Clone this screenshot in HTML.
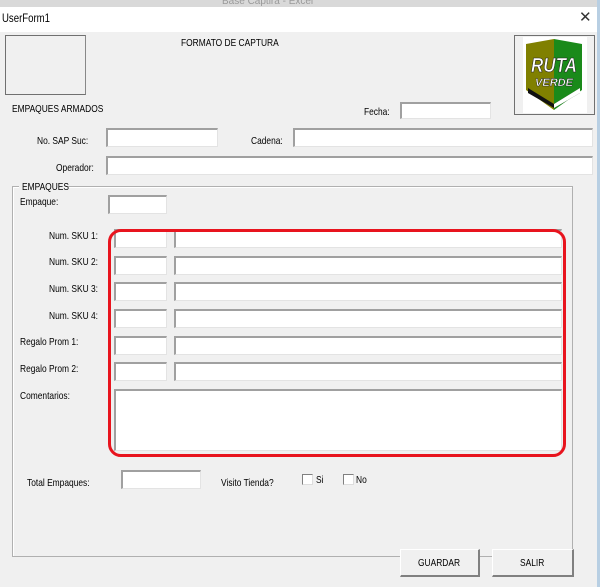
<!DOCTYPE html>
<html><head><meta charset="utf-8"><style>
*{margin:0;padding:0;box-sizing:border-box}
body{width:600px;height:587px;overflow:hidden;background:#f0f0f0;font-family:"Liberation Sans",sans-serif;font-size:10px;color:#000;position:relative}
.a{position:absolute;white-space:nowrap}
.t{position:absolute;white-space:nowrap;transform:scaleX(.8);transform-origin:left top;font-size:10.5px}
.in{position:absolute;background:#fff;border-top:2px solid #a0a0a0;border-left:2px solid #a0a0a0;border-right:1px solid #e3e3e3;border-bottom:1px solid #e3e3e3}
.cb{position:absolute;width:11px;height:11px;background:#fff;border-top:1px solid #808080;border-left:1px solid #808080;border-right:1px solid #ddd;border-bottom:1px solid #ddd}
.btn{position:absolute;background:#f0f0f0;border:1px solid #fff;border-right:2px solid #808080;border-bottom:2px solid #808080;}
</style></head><body>
<div class="a" style="left:0;top:0;width:600px;height:7px;background:#d9d9d9;overflow:hidden"><span class="a" style="left:222px;top:-4px;color:#999;font-size:10px">Base Captira - Excel</span></div>
<div class="a" style="left:0;top:7px;width:597px;height:25px;background:#fff"></div>
<div class="t" style="left:2px;top:11px;font-size:12px">UserForm1</div>
<div class="a" style="left:579px;top:8px;font-size:15px;color:#333">✕</div>
<div class="a" style="left:597px;top:0;width:3px;height:587px;background:#b8cfe3"></div>
<div class="a" style="left:5px;top:35px;width:81px;height:60px;border:1px solid #707070;border-right-color:#888;"></div>
<div class="t" style="left:181px;top:37px">FORMATO DE CAPTURA</div>
<div class="a" style="left:514px;top:35px;width:81px;height:80px;border:1px solid #707070;background:#f0f0f0">
<div class="a" style="left:8px;top:1px;width:64px;height:76px;background:#fff"></div>
<svg class="a" style="left:9px;top:2px" width="60" height="72" viewBox="0 0 60 72">
<path d="M2 6 L30 1 L30 72 L2 52 Z" fill="#808000"/>
<path d="M30 1 L58 6 L58 52 L30 72 Z" fill="#1a8a1a"/>
<path d="M4 50 L30 66 L56 50 L56 55 L30 70 L4 55 Z" fill="#111"/>
<path d="M30 66 L56 50 L56 55 L30 70 Z" fill="#fff"/>
<text x="30" y="34" text-anchor="middle" font-family="Liberation Sans" font-weight="bold" font-style="italic" font-size="20" fill="#fff" stroke="#222" stroke-width=".6" transform="translate(30 0) scale(.85 1) translate(-30 0)">RUTA</text>
<text x="30" y="48" text-anchor="middle" font-family="Liberation Sans" font-weight="bold" font-style="italic" font-size="11" fill="#fff" stroke="#222" stroke-width=".4">VERDE</text>
</svg></div>
<div class="t" style="left:12px;top:103px">EMPAQUES ARMADOS</div>
<div class="t" style="left:364px;top:106px">Fecha:</div>
<div class="in" style="left:400px;top:102px;width:91px;height:17px"></div>
<div class="t" style="left:37px;top:135px">No. SAP Suc:</div>
<div class="in" style="left:106px;top:128px;width:112px;height:19px"></div>
<div class="t" style="left:251px;top:135px">Cadena:</div>
<div class="in" style="left:293px;top:128px;width:300px;height:19px"></div>
<div class="t" style="left:56px;top:162px">Operador:</div>
<div class="in" style="left:106px;top:156px;width:487px;height:19px"></div>
<div class="a" style="left:12px;top:186px;width:561px;height:371px;border:1px solid #b0b0b0;box-shadow:1px 1px 0 #fff inset"></div>
<div class="a" style="left:19px;top:181px;width:46px;height:12px;background:#f0f0f0"></div>
<div class="t" style="left:22px;top:181px">EMPAQUES</div>
<div class="t" style="left:20px;top:196px">Empaque:</div>
<div class="in" style="left:108px;top:195px;width:59px;height:19px"></div>
<div class="t" style="left:49px;top:230px">Num. SKU 1:</div>
<div class="t" style="left:49px;top:256px">Num. SKU 2:</div>
<div class="t" style="left:49px;top:283px">Num. SKU 3:</div>
<div class="t" style="left:49px;top:310px">Num. SKU 4:</div>
<div class="t" style="left:20px;top:336px">Regalo Prom 1:</div>
<div class="t" style="left:20px;top:363px">Regalo Prom 2:</div>
<div class="t" style="left:20px;top:390px">Comentarios:</div>
<div class="in" style="left:114px;top:229px;width:53px;height:19px"></div><div class="in" style="left:174px;top:229px;width:388px;height:19px"></div>
<div class="in" style="left:114px;top:256px;width:53px;height:19px"></div><div class="in" style="left:174px;top:256px;width:388px;height:19px"></div>
<div class="in" style="left:114px;top:282px;width:53px;height:19px"></div><div class="in" style="left:174px;top:282px;width:388px;height:19px"></div>
<div class="in" style="left:114px;top:309px;width:53px;height:19px"></div><div class="in" style="left:174px;top:309px;width:388px;height:19px"></div>
<div class="in" style="left:114px;top:336px;width:53px;height:19px"></div><div class="in" style="left:174px;top:336px;width:388px;height:19px"></div>
<div class="in" style="left:114px;top:362px;width:53px;height:19px"></div><div class="in" style="left:174px;top:362px;width:388px;height:19px"></div>
<div class="in" style="left:114px;top:389px;width:448px;height:62px"></div>
<div class="a" style="left:108px;top:229px;width:458px;height:228px;border:3px solid #e8141e;border-radius:13px"></div>
<div class="t" style="left:27px;top:477px">Total Empaques:</div>
<div class="in" style="left:121px;top:470px;width:80px;height:19px"></div>
<div class="t" style="left:221px;top:477px">Visito Tienda?</div>
<div class="cb" style="left:302px;top:474px"></div><div class="t" style="left:316px;top:474px">Si</div>
<div class="cb" style="left:343px;top:474px"></div><div class="t" style="left:356px;top:474px">No</div>
<div class="btn" style="left:400px;top:549px;width:80px;height:28px"></div><div class="t" style="left:418px;top:557px">GUARDAR</div>
<div class="btn" style="left:492px;top:549px;width:82px;height:28px"></div><div class="t" style="left:520px;top:557px">SALIR</div>
</body></html>
